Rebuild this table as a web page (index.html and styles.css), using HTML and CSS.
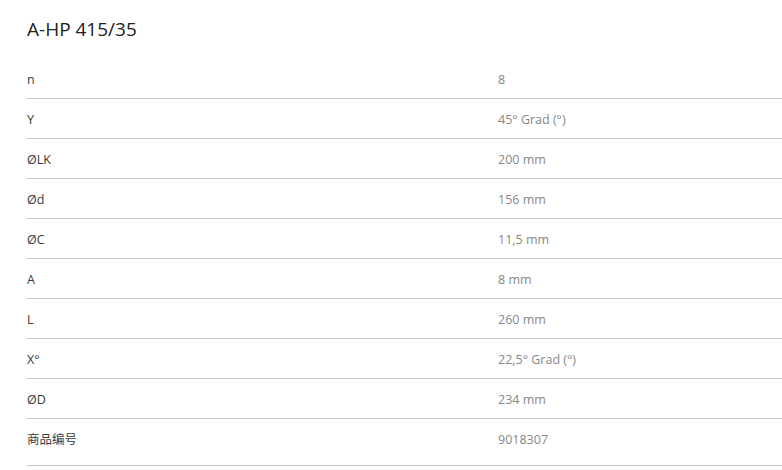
FILE: index.html
```html
<!DOCTYPE html>
<html lang="de">
<head>
<meta charset="utf-8">
<title>A-HP 415/35</title>
<link rel="stylesheet" href="styles.css">
</head>
<body>
<div class="spec">
  <h1 class="spec-title">A-HP 415/35</h1>
  <div class="spec-table">
    <div class="spec-row"><div class="spec-label">n</div><div class="spec-value">8</div></div>
    <div class="spec-row"><div class="spec-label">Y</div><div class="spec-value">45° Grad (°)</div></div>
    <div class="spec-row"><div class="spec-label">ØLK</div><div class="spec-value">200 mm</div></div>
    <div class="spec-row"><div class="spec-label">Ød</div><div class="spec-value">156 mm</div></div>
    <div class="spec-row"><div class="spec-label">ØC</div><div class="spec-value">11,5 mm</div></div>
    <div class="spec-row"><div class="spec-label">A</div><div class="spec-value">8 mm</div></div>
    <div class="spec-row"><div class="spec-label">L</div><div class="spec-value">260 mm</div></div>
    <div class="spec-row"><div class="spec-label">X°</div><div class="spec-value">22,5° Grad (°)</div></div>
    <div class="spec-row"><div class="spec-label">ØD</div><div class="spec-value">234 mm</div></div>
    <div class="spec-row spec-row-last"><div class="spec-label">商品编号</div><div class="spec-value">9018307</div></div>
  </div>
</div>
</body>
</html>
```
FILE: styles.css
```css
html, body {
  margin: 0;
  padding: 0;
  background: #ffffff;
}
body {
  font-family: "Open Sans", "Noto Sans CJK SC", sans-serif;
  overflow: hidden;
}
.spec {
  padding: 16px 0 0 27px;
}
.spec-title {
  margin: 0 0 17px 0;
  font-size: 19px;
  line-height: 26px;
  font-weight: 400;
  color: #222222;
}
.spec-table {
  display: flex;
  flex-direction: column;
}
.spec-row {
  display: grid;
  grid-template-columns: 471px 1fr;
  padding: 11px 0 9px;
  border-bottom: 1px solid #c4c4c4;
  font-size: 12.5px;
  line-height: 19px;
}
.spec-row-last {
  padding-bottom: 16px;
}
.spec-label {
  color: #3a3a3a;
}
.spec-value {
  color: #888888;
}
```
